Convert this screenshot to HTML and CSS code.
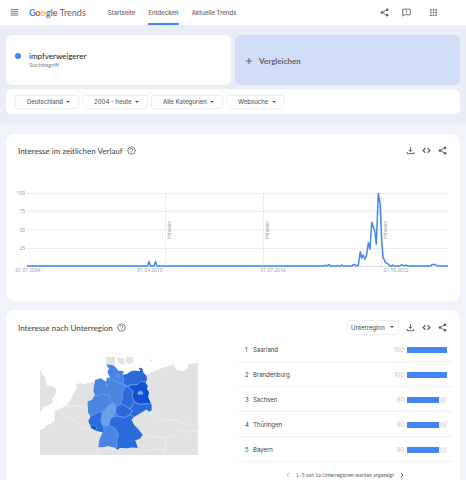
FILE: index.html
```html
<!DOCTYPE html>
<html lang="de">

<head>
    <meta charset="UTF-8">
    <meta name="viewport" content="width=device-width, initial-scale=1.0">
    <title>impfverweigerer - Entdecken - Google Trends</title>
    <link rel="stylesheet" href="styles.css">
</head>

<body>
    <svg class="sprite" aria-hidden="true">
        <symbol id="share" viewBox="0 0 24 24">
            <path d="M19 4.500 5 12l14 7.500" fill="none" stroke="currentColor" stroke-width="2.200"/>
            <circle cx="19" cy="4.500" r="3.300"/><circle cx="5" cy="12" r="3.300"/><circle cx="19" cy="19.500" r="3.300"/>
        </symbol>
        <symbol id="download" viewBox="0 0 24 24">
            <path d="M12 3v11M7 10l5 5 5-5M3 16v4.500h18V16" fill="none" stroke="currentColor" stroke-width="2.400"/>
        </symbol>
        <symbol id="embed" viewBox="0 0 24 24">
            <path d="M9 6l-6 6 6 6M15 6l6 6-6 6" fill="none" stroke="currentColor" stroke-width="3"/>
        </symbol>
        <symbol id="help" viewBox="0 0 24 24">
            <circle cx="12" cy="12" r="10" fill="none" stroke="currentColor" stroke-width="2"/>
            <path d="M8.500 10a3.500 3.500 0 1 1 5.500 2.800c-1.300.9-2 1.300-2 2.700" fill="none" stroke="currentColor" stroke-width="2"/>
            <circle cx="12" cy="18" r="1.200"/>
        </symbol>
    </svg>

    <header class="header">
        <button class="icon-btn menu" aria-label="Menü">
            <svg viewBox="0 0 24 24"><path d="M2 4h20M2 9h20M2 14h20M2 19h20" stroke="currentColor" stroke-width="2"/></svg>
        </button>
        <a class="logo" href="#"><span class="blue">G</span><span class="red">o</span><span class="yellow">o</span><span class="blue">g</span><span class="green">l</span><span class="red">e</span> <span class="trends">Trends</span></a>
        <nav class="nav">
            <a href="#">Startseite</a>
            <a href="#" class="active">Entdecken</a>
            <a href="#">Aktuelle Trends</a>
        </nav>
        <div class="header-icons">
            <button class="icon-btn" aria-label="Teilen"><svg><use href="#share"/></svg></button>
            <button class="icon-btn" aria-label="Feedback">
                <svg viewBox="0 0 24 24"><path d="M2 22V3h20v15H6z" fill="none" stroke="currentColor" stroke-width="2.200"/><path d="M12 6v5M12 12.500v2" stroke="currentColor" stroke-width="2"/></svg>
            </button>
            <button class="icon-btn apps" aria-label="Google-Apps">
                <svg viewBox="0 0 24 24"><path d="M3 5h18M3 12h18M3 19h18" stroke="currentColor" stroke-width="4" stroke-dasharray="4 3"/></svg>
            </button>
        </div>
    </header>

    <section class="explore">
        <div class="terms">
            <div class="term">
                <span class="dot"></span>
                <div>
                    <div class="term-name">impfverweigerer</div>
                    <div class="term-type">Suchbegriff</div>
                </div>
            </div>
            <button class="compare">
                <svg viewBox="0 0 8 8"><path d="M4 1v6M1 4h6" stroke="currentColor"/></svg>
                Vergleichen
            </button>
        </div>
        <div class="filters">
            <div class="pill"><select aria-label="Land"><option>Deutschland</option></select></div>
            <div class="pill"><select aria-label="Zeitraum"><option>2004 - heute</option></select></div>
            <div class="pill"><select aria-label="Kategorie"><option>Alle Kategorien</option></select></div>
            <div class="pill"><select aria-label="Suchtyp"><option>Websuche</option></select></div>
        </div>
    </section>

    <main class="main">
        <section class="card timeline">
            <div class="card-head">
                <h2>Interesse im zeitlichen Verlauf</h2>
                <button class="icon-btn" aria-label="Hilfe"><svg><use href="#help"/></svg></button>
                <div class="actions">
                    <button class="icon-btn" aria-label="Herunterladen"><svg><use href="#download"/></svg></button>
                    <button class="icon-btn" aria-label="Einbetten"><svg><use href="#embed"/></svg></button>
                    <button class="icon-btn" aria-label="Teilen"><svg><use href="#share"/></svg></button>
                </div>
            </div>
            <svg class="chart" viewBox="0 0 438 92">
                <path class="grid" d="M13 9.500h421M13 27.500h421M13 46h421M13 64.500h421"/>
                <path class="note-line" d="M151.500 9v73M249.500 9v73M367.500 9v73"/>
                <path class="axis" d="M13 82.500h421"/>
                <g class="y-labels">
                    <text x="11" y="11">100</text>
                    <text x="11" y="29">75</text>
                    <text x="11" y="48">50</text>
                    <text x="11" y="66">25</text>
                </g>
                <g class="x-labels">
                    <text x="14" y="88">01.01.2004</text>
                    <text x="136" y="88">01.04.2010</text>
                    <text x="259" y="88">01.07.2016</text>
                    <text x="382" y="88">01.10.2022</text>
                </g>
                <g class="notes">
                    <text transform="translate(157 46) rotate(-90)">Hinweis</text>
                    <text transform="translate(255 46) rotate(-90)">Hinweis</text>
                    <text transform="translate(373 46) rotate(-90)">Hinweis</text>
                </g>
                <path class="line" d="M13 82H133.500L135 77.500 136.500 82H140L141.500 77.500 143 82H310L311.500 81 313 82 315 80.500 316.500 82H326.500L328 81 329.500 82H338L339.700 80.300 342 81.500 344.300 81.500 346.300 67.700 347.700 74.300 349 71 351 75.300 352.700 70.700 354.300 58.700 356 65.300 357.700 38.300 360.700 47 362.300 60.300 364.300 9.500 366 19.300 367.700 56 369 73 371.300 78.300 374.700 80.300 375.500 82H377.500L378.700 81 380 82H385.500L387 81H389L390.500 82 392 81 393.500 82H416.500L418 80.500H421.500L423.500 82H434"/>
            </svg>
        </section>

        <section class="card region">
            <div class="card-head">
                <h2>Interesse nach Unterregion</h2>
                <button class="icon-btn" aria-label="Hilfe"><svg><use href="#help"/></svg></button>
                <div class="actions">
                    <div class="pill"><select aria-label="Auflösung"><option>Unterregion</option></select></div>
                    <button class="icon-btn" aria-label="Herunterladen"><svg><use href="#download"/></svg></button>
                    <button class="icon-btn" aria-label="Einbetten"><svg><use href="#embed"/></svg></button>
                    <button class="icon-btn" aria-label="Teilen"><svg><use href="#share"/></svg></button>
                </div>
            </div>
            <div class="region-body">
                <div class="map-wrap">
                    <svg class="map" viewBox="120 156 474 294" role="img" aria-label="Karte von Deutschland">
                        <clipPath id="germany">
                            <path d="M318 178 340 181 350 190 355 197 370 198 369 210 380 208 395 198 405 197 421 199 417 188 426 190 430 203 439 212 441 225 436 233 443 243 440 252 447 262 444 275 450 290 455 300 455 316 447 320 440 313 420 325 400 337 394 344 402 360 414 372 428 390 418 402 405 405 413 428 395 427 380 430 360 428 352 434 345 428 325 423 310 427 295 427 298 405 308 382 290 377 275 370 265 348 272 335 264 322 262 290 275 285 285 270 280 258 285 225 302 220 318 230 320 218 330 218 322 200 327 192z"/>
                        </clipPath>
                        <!-- neighbours -->
                        <g fill="#e2e2e2">
                            <path d="M120 195 128 209 134 214 138 229 142 243 155 242 167 250 169 260 160 278 156 280 158 293 146 301 130 307 120 323z"/>
                            <path d="M120 450V374L132 372 137 362 156 355 164 347V316L179 312 199 302 214 280 222 263 230 253 228 238 240 234 254 237 278 230 300 240 400 240 437 212 450 204 488 188 520 179 530 195 552 198 563 190 566 176 594 174V450z"/>
                            <path d="M319 156H346L343 182 319 178zM350 161 358 157 373 162 375 177 367 179 353 172zM377 156H397L400 170 390 177 378 172zM449 162 457 166 454 171 449 168z"/>
                        </g>
                        <path class="border" d="M165 316 180 314 192 332 212 340 228 349 240 364 270 372M200 304 230 302 264 310M565 177 594 174M440 318 460 325 475 338 493 346 521 344 543 352 572 360M428 393 454 395 494 398 518 394 542 374 562 382 594 377M494 398 499 418 491 450M300 425 290 450M277 440 302 427 332 430 352 434M410 426 430 440 460 434 494 428"/>
                        <!-- federal states -->
                        <g class="states" clip-path="url(#germany)">
                            <path fill="#4b85e3" d="M250 170H470V440H250z"/>
                            <path fill="#2a6bdb" d="M370 190 368 212 372 225 368 235 380 243 395 240 415 238 436 231 460 215 440 180 400 180z"/>
                            <path fill="#0d52cf" d="M384 243 395 240 414 238 421 230 436 230 470 240V300L448 296 420 298 404 292 396 275 399 258 388 250z"/>
                            <path fill="#2a6bdb" d="M374 248 384 243 388 250 399 258 396 275 404 292 396 303 390 312 375 302 362 297 367 280 368 262z"/>
                            <path fill="#2a6bdb" d="M404 292 420 298 448 296 470 296V330L400 345 395 335 388 330 398 318 390 312 396 303z"/>
                            <path fill="#2a6bdb" d="M348 305 362 297 375 302 390 312 398 318 388 330 372 338 355 334 346 322z"/>
                            <path fill="#6f9fe8" d="M330 298 341 294 348 305 346 322 336 338 330 345 327 360 318 363 306 358 303 340 312 318 322 305z"/>
                            <path fill="#2a6bdb" d="M250 335 275 333 290 325 306 318 305 330 303 345 306 358 311 366 312 383 280 390 250 370z"/>
                            <path fill="#0d52cf" d="M270 362 284 360 290 368 286 380 266 377z"/>
                            <path fill="#2a6bdb" d="M330 345 336 338 346 334 355 334 372 338 388 330 400 334 440 390 430 440H340L352 425 350 405 356 388 345 370 327 360z"/>
                            <path fill="#8db3ee" d="M414 263 419 258 427 261 428 268 421 267 415 269z"/>
                            <path fill="none" d="M320 218 332 224 348 228 358 235 370 237 380 243M275 273 283 270 300 273 310 265 318 270 326 268 328 285 341 294M316 236 324 239 320 244 315 240"/>
                            <path fill="none" d="M348 212 354 208 358 214 352 219z"/>
                        </g>
                    </svg>
                </div>
                <div class="ranking">
                    <ol>
                        <li><span class="rank">1</span><span class="name">Saarland</span><span class="value">100</span><span class="bar"><span style="width: 100%"></span></span></li>
                        <li><span class="rank">2</span><span class="name">Brandenburg</span><span class="value">100</span><span class="bar"><span style="width: 100%"></span></span></li>
                        <li><span class="rank">3</span><span class="name">Sachsen</span><span class="value">80</span><span class="bar"><span style="width: 80%"></span></span></li>
                        <li><span class="rank">4</span><span class="name">Thüringen</span><span class="value">80</span><span class="bar"><span style="width: 80%"></span></span></li>
                        <li><span class="rank">5</span><span class="name">Bayern</span><span class="value">80</span><span class="bar"><span style="width: 80%"></span></span></li>
                    </ol>
                    <div class="pager">
                        <button aria-label="Zurück" disabled><svg viewBox="0 0 6 6"><path d="M4 1L2 3l2 2" fill="none" stroke="currentColor"/></svg></button>
                        <span>1–5 von 16 Unterregionen werden angezeigt</span>
                        <button aria-label="Weiter"><svg viewBox="0 0 6 6"><path d="M2 1l2 2-2 2" fill="none" stroke="currentColor"/></svg></button>
                    </div>
                </div>
            </div>
        </section>
    </main>
</body>

</html>
```
FILE: styles.css
```css
* {
    box-sizing: border-box;
}

body {
    margin: 0;
    min-height: 100vh;
    display: flex;
    flex-direction: column;
    background-color: #f0f3f9;
    color: #3c4043;
    font-family: Lato, "Open Sans", sans-serif;
    font-size: 7px;
    line-height: 8px;
}

a {
    color: inherit;
    text-decoration: none;
}

button, select {
    font: inherit;
    color: inherit;
    background: none;
    border: none;
    padding: 0;
    margin: 0;
}

.sprite {
    display: none;
}

svg {
    display: block;
    fill: currentColor;
}

.icon-btn {
    width: 9px;
    height: 9px;
    color: #55585c;
}

.icon-btn svg {
    width: 100%;
    height: 100%;
}

/* header */
.header {
    display: flex;
    align-items: center;
    height: 25px;
    padding: 0 28px 0 10px;
    background-color: white;
}

.logo {
    margin-left: 10px;
    font-size: 9px;
    line-height: 12px;
    white-space: nowrap;
}

.logo span {
    font-weight: bold;
}

.logo .trends {
    font-weight: normal;
    color: #5f6368;
}

.blue { color: #4285f4; }
.red { color: #ea4335; }
.yellow { color: #fbbc04; }
.green { color: #34a853; }

.nav {
    display: flex;
    align-self: stretch;
    gap: 13px;
    margin-left: 22px;
    font-family: Inter, sans-serif;
    font-size: 6px;
    font-weight: 500;
    color: #5f6368;
}

.nav a {
    display: flex;
    align-items: center;
    padding-top: 2px;
    border-bottom: 2px solid transparent;
    white-space: nowrap;
}

.nav .active {
    border-color: #4285f4;
}

.header-icons {
    display: flex;
    gap: 13px;
    margin-left: auto;
}

.header-icons .apps {
    margin-left: 5px;
}

/* search terms and filters */
.explore {
    display: flex;
    flex-direction: column;
    gap: 4px;
    padding: 10px 6px;
    background-color: #e8edf6;
}

.terms {
    display: grid;
    grid-template-columns: 1fr 1fr;
    gap: 4px;
    height: 50px;
}

.term, .compare {
    display: flex;
    align-items: center;
    border-radius: 6px;
}

.term {
    gap: 8px;
    padding: 0 9px;
    background-color: white;
}

.dot {
    width: 6px;
    height: 6px;
    margin-bottom: 8px;
    border-radius: 50%;
    background-color: #4285f4;
}

.term-name {
    font-size: 8px;
    line-height: 10px;
    color: #202124;
}

.term-type {
    font-size: 6px;
    color: #80868b;
}

.compare {
    gap: 6px;
    padding: 2px 10px 0;
    background-color: #d2def5;
    color: #5f6368;
    font-size: 8px;
    font-weight: bold;
}

.compare svg {
    width: 8px;
    height: 8px;
}

.filters {
    display: flex;
    align-items: center;
    gap: 3px;
    height: 25px;
    padding: 0 9px;
    border-radius: 6px;
    background-color: white;
}

.pill {
    position: relative;
    border: 1px solid #eceef0;
    border-radius: 3px;
}

.pill select {
    display: block;
    height: 12px;
    padding: 0 15px 0 11px;
    appearance: none;
    font-family: Inter, sans-serif;
    font-size: 6px;
    font-weight: 500;
    color: #5f6368;
}

.pill::after {
    content: "";
    position: absolute;
    right: 8px;
    top: 5px;
    border: 2px solid transparent;
    border-top-color: #55585c;
    pointer-events: none;
}

/* cards */
.main {
    flex: 1;
    display: flex;
    flex-direction: column;
    gap: 9px;
    padding: 10px 6px 0;
}

.card {
    padding: 8px 8px 0;
    border-radius: 8px;
    background-color: white;
}

.card-head {
    display: flex;
    align-items: center;
    gap: 4px;
    height: 19px;
    padding: 0 5px 0 4px;
}

.card h2 {
    margin: 0;
    font-size: 8px;
    line-height: 10px;
    font-weight: normal;
}

.actions {
    display: flex;
    align-items: center;
    gap: 7px;
    margin-left: auto;
}

/* timeline */
.timeline {
    padding: 7px 8px 25px;
}

.chart {
    width: 100%;
    margin-top: 24px;
    font-family: Roboto, sans-serif;
    font-size: 5px;
}

.chart path {
    fill: none;
}

.grid, .note-line {
    stroke: #ebebeb;
}

.axis {
    stroke: #dadce0;
}

.line {
    stroke: #4285f4;
    stroke-width: 1.5px;
    stroke-linejoin: round;
}

.chart text {
    fill: #a0a4a8;
}

.y-labels {
    text-anchor: end;
}

.x-labels, .notes {
    text-anchor: middle;
}

/* region */
.region {
    flex: 1;
    border-radius: 8px 8px 0 0;
}

.region .pill select {
    height: 13px;
    padding: 0 13px 0 4px;
    font-weight: normal;
    color: #3c4043;
}

.region .pill::after {
    right: 4px;
}

.region-body {
    display: grid;
    grid-template-columns: 216px 1fr;
    gap: 8px;
}

.map-wrap {
    padding: 20px 32px 0 26px;
}

.map {
    width: 100%;
}

.border {
    fill: none;
    stroke: #f3f3f3;
    stroke-width: 2px;
}

.states path {
    stroke: #7ba6ec;
    stroke-width: 2px;
}

.ranking ol {
    list-style: none;
    margin: 0;
    padding: 0;
}

.ranking li {
    display: flex;
    align-items: center;
    height: 25px;
    padding: 1px 5px 0 7px;
    border-bottom: 1px solid #eeeff0;
    font-family: Inter, sans-serif;
    font-size: 6px;
}

.rank {
    width: 8px;
}

.value {
    margin-left: auto;
    color: #bdc1c6;
}

.bar {
    width: 40px;
    height: 6px;
    margin-left: 3px;
    background-color: #eeeeee;
}

.bar span {
    display: block;
    height: 100%;
    background-color: #4285f4;
}

.pager {
    display: flex;
    align-items: center;
    justify-content: center;
    gap: 5px;
    padding-top: 9px;
    font-size: 5px;
    color: #5f6368;
}

.pager svg {
    width: 6px;
    height: 6px;
}

.pager button:disabled {
    color: #bdc1c6;
}
```
